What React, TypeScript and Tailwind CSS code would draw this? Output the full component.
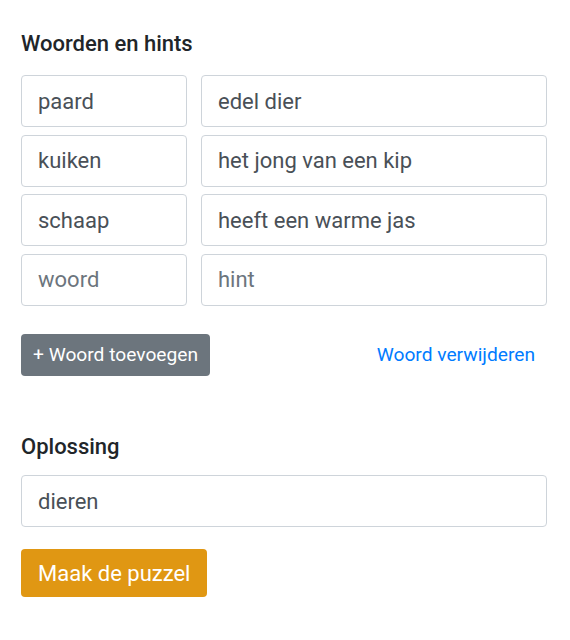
import React, { useState } from "react";

interface Entry {
    word: string;
    hint: string;
}

const initialEntries: Entry[] = [
    { word: "paard", hint: "edel dier" },
    { word: "kuiken", hint: "het jong van een kip" },
    { word: "schaap", hint: "heeft een warme jas" },
    { word: "", hint: "" },
];

const inputClass =
    "h-[52px] w-full px-[16px] border border-[#ced4da] rounded-[4px] bg-white text-[22px] text-[#495057] placeholder:text-[#6c757d] focus:outline-none";

const App = () => {
    const [entries, setEntries] = useState<Entry[]>(initialEntries);
    const [solution, setSolution] = useState("dieren");

    const update = (i: number, key: keyof Entry, value: string) => {
        setEntries(entries.map((e, idx) => (idx === i ? { ...e, [key]: value } : e)));
    };

    return (
        <div className="min-h-screen bg-white font-['Roboto',sans-serif]">
            <div className="ml-[21px] w-[526px] pt-[31px]">
                {/* Woorden en hints */}
                <h5 className="text-[22px] leading-[26px] font-medium text-[#212529]">
                    Woorden en hints
                </h5>
                <div className="mt-[18px] grid grid-cols-[166px_1fr] gap-x-[14px] gap-y-[7.5px]">
                    {entries.map((e, i) => (
                        <React.Fragment key={i}>
                            <input
                                className={inputClass}
                                placeholder="woord"
                                value={e.word}
                                onChange={(ev) => update(i, "word", ev.target.value)}
                            />
                            <input
                                className={inputClass}
                                placeholder="hint"
                                value={e.hint}
                                onChange={(ev) => update(i, "hint", ev.target.value)}
                            />
                        </React.Fragment>
                    ))}
                </div>

                <div className="mt-[28.5px] flex items-center justify-between">
                    <button
                        type="button"
                        onClick={() => setEntries([...entries, { word: "", hint: "" }])}
                        className="h-[42px] px-[12px] rounded-[4px] bg-[#6c757d] text-white text-[19.2px]"
                    >
                        + Woord toevoegen
                    </button>
                    <button
                        type="button"
                        onClick={() => setEntries(entries.slice(0, -1))}
                        className="h-[42px] px-[12px] text-[#007bff] text-[19.2px]"
                    >
                        Woord verwijderen
                    </button>
                </div>

                {/* Oplossing */}
                <h5 className="mt-[58px] text-[22px] leading-[26px] font-medium text-[#212529]">
                    Oplossing
                </h5>
                <input
                    className={"mt-[15px] " + inputClass}
                    value={solution}
                    onChange={(ev) => setSolution(ev.target.value)}
                />
                <button
                    type="button"
                    className="mt-[22px] h-[48px] px-[17px] rounded-[4px] bg-[#e09713] text-white text-[22px]"
                >
                    Maak de puzzel
                </button>
            </div>
        </div>
    );
};

export default App;
